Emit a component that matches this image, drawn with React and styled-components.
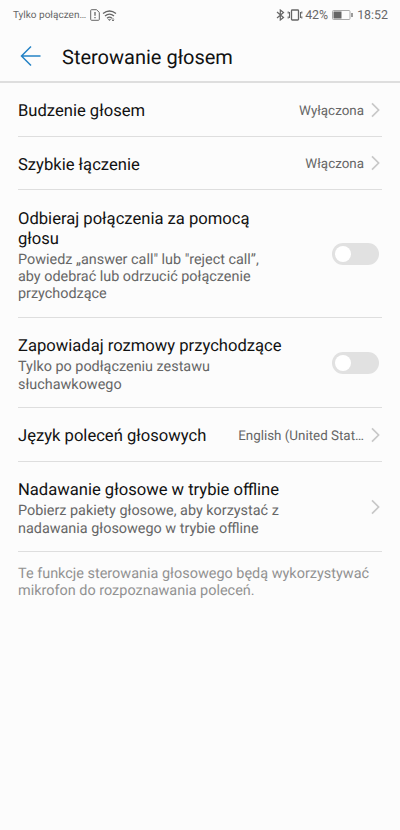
import React from 'react';
import styled, { createGlobalStyle } from 'styled-components';

const GlobalStyle = createGlobalStyle`
  * { box-sizing: border-box; }
  html, body { margin: 0; padding: 0; background: #fcfcfc; }
  body {
    font-family: Roboto, "Noto Sans", sans-serif;
    text-rendering: geometricPrecision;
  }
`;

const Screen = styled.main`
  width: 400px;
  height: 830px;
  overflow: hidden;
  background: #fcfcfc;
  color: #111;
`;

const StatusBar = styled.div`
  height: 31px;
  padding: 0 12px 1px 13px;
  display: flex;
  align-items: center;
  justify-content: space-between;
  color: #666;
  font-size: 12px;
`;

const StatusGroup = styled.div`
  display: flex;
  align-items: center;
`;

const Carrier = styled.span`
  width: 77px;
  padding-top: 1px;
  font-size: 10px;
  white-space: nowrap;
`;

const Level = styled.span`
  margin: 0 4px 0 2px;
  font-size: 12.4px;
`;

const Clock = styled.span`
  margin-left: 4px;
  font-size: 12.4px;
`;

const Icon = styled.svg`
  display: block;
  flex: none;
  fill: none;
  stroke: currentColor;
`;

const Header = styled.header`
  height: 52px;
  padding-left: 20px;
  display: flex;
  align-items: center;
  border-bottom: 2px solid #dedede;
`;

const BackButton = styled.button`
  width: 42px;
  padding: 0;
  border: 0;
  background: none;
  color: #2482c5;
`;

const Heading = styled.h1`
  margin: 0;
  padding-top: 2px;
  font-size: 20px;
  font-weight: 400;
  line-height: 26px;
`;

const List = styled.div`
  padding: 0 18px;
`;

const Row = styled.section`
  height: ${(p) => p.$height}px;
  display: flex;
  align-items: center;
  justify-content: space-between;
  border-bottom: 1px solid #dedede;
`;

const Copy = styled.div`
  flex: none;
  padding-top: 5px;
`;

const Title = styled.h2`
  margin: 0;
  font-size: 16.6px;
  font-weight: 400;
  line-height: 20px;
  white-space: nowrap;
`;

const Description = styled.p`
  margin: 1px 0 0;
  color: #666;
  font-size: 14.4px;
  line-height: 17.3px;
  white-space: nowrap;
`;

const Value = styled.div`
  display: flex;
  align-items: center;
  gap: 7px;
  margin-right: 2px;
  color: #666;
  font-size: 13.4px;
`;

const ValueText = styled.span`
  padding-top: 3px;
`;

const Toggle = styled.button`
  width: 47px;
  height: 22px;
  margin-right: 3px;
  padding: 3px;
  border: 0;
  border-radius: 11px;
  background: #e1e1e1;
`;

const Knob = styled.span`
  display: block;
  width: 16px;
  height: 16px;
  border-radius: 50%;
  background: #fff;
`;

const Note = styled.p`
  margin: 13px 0 0;
  color: #929292;
  font-size: 14.44px;
  line-height: 17.3px;
  white-space: nowrap;
`;

const Lines = ({ items }) =>
  items.map((line, i) => (
    <React.Fragment key={line}>
      {i > 0 && <br />}
      {line}
    </React.Fragment>
  ));

const Chevron = () => (
  <Icon width="9" height="16" viewBox="0 0 9 16">
    <path d="M1 1.4 7.6 8 1 14.600" stroke="#c8c8c8" strokeWidth="1.7" />
  </Icon>
);

const rows = [
  { height: 54, title: ['Budzenie głosem'], value: 'Wyłączona' },
  { height: 53, title: ['Szybkie łączenie'], value: 'Włączona' },
  {
    height: 128,
    title: ['Odbieraj połączenia za pomocą', 'głosu'],
    text: ['Powiedz „answer call" lub "reject call”,', 'aby odebrać lub odrzucić połączenie', 'przychodzące'],
    toggle: true,
  },
  { height: 90, title: ['Zapowiadaj rozmowy przychodzące'], text: ['Tylko po podłączeniu zestawu', 'słuchawkowego'], toggle: true },
  { height: 54, title: ['Język poleceń głosowych'], value: 'English (United Stat…' },
  { height: 90, title: ['Nadawanie głosowe w trybie offline'], text: ['Pobierz pakiety głosowe, aby korzystać z', 'nadawania głosowego w trybie offline'] },
];

export default function App() {
  return (
    <Screen>
      <GlobalStyle />
      <StatusBar>
        <StatusGroup>
          <Carrier>Tylko połączen…</Carrier>
          <Icon width="10" height="12" viewBox="0 0 10 12">
            <path d="M.7 1.5q0-.8.8-.8h5L9.3 3.4v7q0 .9-.8.9h-7q-.8 0-.8-.9Z" />
            <path d="M5 3v3.7M5 8v1.3" strokeWidth="1.3" />
          </Icon>
          <Icon width="17" height="13" viewBox="0 0 17 13" strokeWidth="1.3">
            <path d="M3 4.6Q9.5 -.6 16 4.6M5 7q4.500-3.700 9 0M7 9.200q2.500-2 5 0" />
            <path d="M8.400 10.400h2.200L9.500 11.700ZM13 9v3m-1.200-1.200L13 12l1.200-1.200" strokeWidth=".8" />
          </Icon>
        </StatusGroup>
        <StatusGroup>
          <Icon width="11" height="12" viewBox="0 0 11 12" strokeWidth="1.2">
            <path d="m1 3 6.500 5.500L4.300 11V1l3.200 2.500L1 9" />
          </Icon>
          <Icon width="16" height="12" viewBox="0 0 16 12" strokeWidth="1.3">
            <rect x="4.500" y="1" width="7" height="10" rx=".8" />
            <path d="M2.500 3v6M13.500 3v6M1.200 2.500v2M1.200 7.500v2M14.800 2.500v2M14.800 7.500v2" strokeWidth="1.1" />
          </Icon>
          <Level>42%</Level>
          <Icon width="21" height="10" viewBox="0 0 21 10">
            <rect x=".5" y=".5" width="17.5" height="9" rx="1" stroke="#aaa" />
            <path d="M1.500 1.500H9.500v7h-8Z" fill="currentColor" stroke="none" />
            <path d="M20 3v4" strokeWidth="1.3" />
          </Icon>
          <Clock>18:52</Clock>
        </StatusGroup>
      </StatusBar>
      <Header>
        <BackButton aria-label="Wstecz">
          <Icon width="22" height="22" viewBox="0 0 22 22" strokeWidth="1.5">
            <path d="M20.500 11H1.500M11 1.500 1.500 11l9.500 9.500" />
          </Icon>
        </BackButton>
        <Heading>Sterowanie głosem</Heading>
      </Header>
      <List>
        {rows.map((row) => (
          <Row key={row.title[0]} $height={row.height}>
            <Copy>
              <Title><Lines items={row.title} /></Title>
              {row.text && <Description><Lines items={row.text} /></Description>}
            </Copy>
            {row.toggle ? (
              <Toggle role="switch" aria-checked="false" aria-label={row.title.join(' ')}><Knob /></Toggle>
            ) : (
              <Value>{row.value && <ValueText>{row.value}</ValueText>}<Chevron /></Value>
            )}
          </Row>
        ))}
        <Note><Lines items={['Te funkcje sterowania głosowego będą wykorzystywać', 'mikrofon do rozpoznawania poleceń.']} /></Note>
      </List>
    </Screen>
  );
}
